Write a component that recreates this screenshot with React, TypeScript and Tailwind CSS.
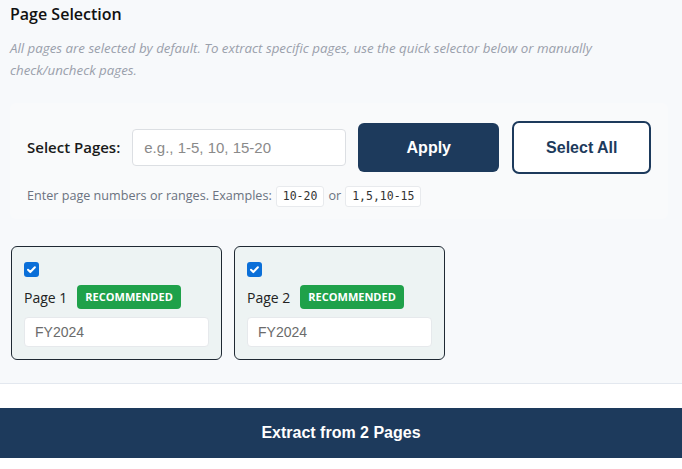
import React, { useState } from "react";

function Check() {
  return (
    <span className="flex h-[15px] w-[15px] items-center justify-center rounded-[3px] bg-[#0b6fd8]">
      <svg width="11" height="11" viewBox="0 0 12 12" fill="none">
        <path d="M2.2 6.3l2.5 2.5 5-5.3" stroke="#fff" strokeWidth="2.2" strokeLinecap="round" strokeLinejoin="round" />
      </svg>
    </span>
  );
}

function PageCard({ n }: { n: number }) {
  const [val, setVal] = useState("FY2024");
  return (
    <div className="w-[211px] rounded-[6px] border border-[#1f2933] bg-[#edf3f3] px-[12px] pb-[12px] pt-[15px]">
      <Check />
      <div className="mt-[8px] flex items-center gap-[10px]">
        <span className="font-['Open_Sans',sans-serif] text-[14px] text-[#222]">Page {n}</span>
        <span className="flex h-[24px] items-center rounded-[4px] bg-[#1fa14a] px-[8px] font-['Open_Sans',sans-serif] text-[11px] font-bold text-white">
          RECOMMENDED
        </span>
      </div>
      <input
        value={val}
        onChange={(e) => setVal(e.target.value)}
        className="mt-[8px] h-[30px] w-[185px] rounded-[4px] border border-[#e6e9ec] bg-white px-[10px] font-['Liberation_Sans',Arial,sans-serif] text-[14px] text-[#6b6b6b] outline-none"
      />
    </div>
  );
}

export default function App() {
  return (
    <div className="h-[469px] w-[682px] overflow-hidden bg-white font-['Open_Sans',sans-serif]">
      <div className="border-b border-[#e3e8ef] bg-[#f7f9fb] pb-[23px] pt-[2px]">
        <h2 className="px-[10px] text-[16px] font-semibold leading-[24px] text-[#111]">Page Selection</h2>
        <p className="mt-[11px] px-[10px] text-[13.3px] italic leading-[22px] text-[#9aa0ab]">
          All pages are selected by default. To extract specific pages, use the quick selector below or manually
          <br />
          check/uncheck pages.
        </p>

        {/* quick selector */}
        <div className="ml-[10px] mt-[22px] w-[658px] rounded-[6px] bg-[#f9fafb] px-[17px] pb-[12px] pt-[18px]">
          <div className="flex items-center">
            <span className="shrink-0 whitespace-nowrap text-[15px] font-semibold text-[#1a1a1a]">Select Pages:</span>
            <input
              placeholder="e.g., 1-5, 10, 15-20"
              className="ml-[12px] h-[37px] w-[214px] shrink-0 rounded-[4px] border border-[#dcdfe3] bg-white px-[11px] font-['Liberation_Sans',Arial,sans-serif] text-[15px] text-[#333] outline-none placeholder:text-[#8a8a8a]"
            />
            <button className="ml-[12px] h-[49px] w-[141px] shrink-0 rounded-[6px] bg-[#1d3a5c] font-['Liberation_Sans',Arial,sans-serif] text-[16px] font-bold text-white">
              Apply
            </button>
            <button className="ml-[13px] h-[53px] w-[139px] shrink-0 rounded-[7px] border-2 border-[#1d3a5c] bg-white font-['Liberation_Sans',Arial,sans-serif] text-[16px] font-bold text-[#1d3a5c]">
              Select All
            </button>
          </div>
          <div className="mt-[12px] flex items-center gap-[4px] text-[12.6px] text-[#6b7280]">
            <span>Enter page numbers or ranges. Examples:</span>
            <code className="rounded-[3px] border border-[#e8eaed] bg-white px-[6px] py-[1px] font-['DejaVu_Sans_Mono',monospace] text-[11.5px] text-[#333]">
              10-20
            </code>
            <span>or</span>
            <code className="rounded-[3px] border border-[#e8eaed] bg-white px-[6px] py-[1px] font-['DejaVu_Sans_Mono',monospace] text-[11.5px] text-[#333]">
              1,5,10-15
            </code>
          </div>
        </div>

        {/* page cards */}
        <div className="ml-[11px] mt-[27px] flex gap-[12px]">
          <PageCard n={1} />
          <PageCard n={2} />
        </div>
      </div>

      <div className="pt-[24px]">
        <button className="h-[50px] w-full bg-[#1d3a5c] font-['Liberation_Sans',Arial,sans-serif] text-[16px] font-bold text-white">
          Extract from 2 Pages
        </button>
      </div>
    </div>
  );
}
